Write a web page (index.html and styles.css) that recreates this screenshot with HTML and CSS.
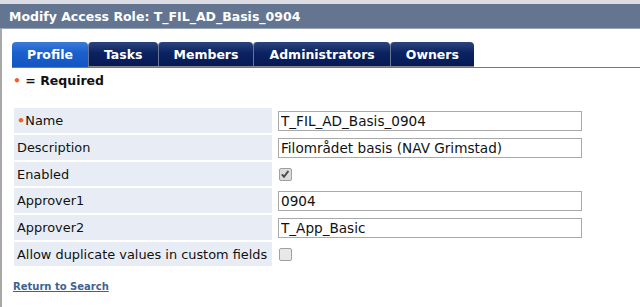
FILE: index.html
```html
<!DOCTYPE html>
<html>
<head>
<meta charset="utf-8">
<link rel="stylesheet" href="styles.css">
</head>
<body>
<div class="topstrip"></div>
<div class="titlebar">Modify Access Role: T_FIL_AD_Basis_0904</div>
<div class="page">
  <div class="tabs">
    <div class="tab active">Profile</div>
    <div class="tab">Tasks</div>
    <div class="tab">Members</div>
    <div class="tab">Administrators</div>
    <div class="tab">Owners</div>
  </div>
  <div class="required"><span class="dot">•</span> = Required</div>
  <table class="form">
    <tr><td class="label"><span class="dot">•</span>Name</td><td class="field"><input class="text" type="text" value="T_FIL_AD_Basis_0904"></td></tr>
    <tr><td class="label">Description</td><td class="field"><input class="text" type="text" value="Filområdet basis (NAV Grimstad)"></td></tr>
    <tr class="short"><td class="label">Enabled</td><td class="field"><span class="cb checked"><svg viewBox="0 0 10 10" width="10" height="10"><path d="M1.8 5.4 L4 7.8 L8.4 2" fill="none" stroke="#4a4a4a" stroke-width="2"/></svg></span></td></tr>
    <tr><td class="label">Approver1</td><td class="field"><input class="text" type="text" value="0904"></td></tr>
    <tr><td class="label">Approver2</td><td class="field"><input class="text" type="text" value="T_App_Basic"></td></tr>
    <tr class="short"><td class="label">Allow duplicate values in custom fields</td><td class="field"><span class="cb"></span></td></tr>
  </table>
  <a class="back" href="#">Return to Search</a>
</div>
</body>
</html>
```
FILE: styles.css
```css
html, body {
  margin: 0;
  padding: 0;
  background: #fff;
  font-family: "DejaVu Sans", Verdana, sans-serif;
  font-size: 12px;
  color: #111;
}
.topstrip {
  height: 4px;
  background: #dcdde4;
}
.titlebar {
  height: 25px;
  line-height: 25px;
  background: #637591;
  border-bottom: 1px solid #9aa6ba;
  color: #fff;
  font-weight: bold;
  font-size: 12.5px;
  padding-left: 9px;
  box-sizing: border-box;
}
.page {
  border-left: 2px solid #a8a8a8;
  padding: 13px 0 0 10px;
  height: 278px;
  box-sizing: border-box;
}
.tabs {
  display: flex;
  border-bottom: 1px solid #6a78a8;
  height: 25px;
}
.tab {
  height: 24px;
  line-height: 25px;
  padding: 0 15px;
  color: #fff;
  font-weight: bold;
  font-size: 12.5px;
  background: linear-gradient(#2b447c, #0c2362 45%, #051a55);
  border-radius: 4px 4px 0 0;
  border-left: 1px solid #6a7696;
  border-bottom: 1px solid #888;
}
.tab:first-child { border-left: none; }
.tab.active {
  background: linear-gradient(#3b7ad8, #1a60cc 45%, #1356c4);
  border-bottom: 1px solid #1356c4;
}
.required {
  font-weight: bold;
  font-size: 12.5px;
  margin: 5px 0 0 1px;
  height: 16px;
  line-height: 16px;
}
.dot {
  color: #f0602a;
  font-weight: bold;
}
.form {
  border-spacing: 2px;
  margin: 17px 0 0 0;
}
.form td {
  padding: 0;
}
.label {
  background: #e8edf5;
  width: 252px;
  height: 25px;
  padding: 0 3px !important;
  font-size: 12.9px;
  white-space: nowrap;
}
.short .label { height: 24px; }
.field {
  padding-left: 4px !important;
}
.text {
  width: 304px;
  height: 20px;
  box-sizing: border-box;
  border: 1px solid #a9a9a9;
  font-family: "DejaVu Sans", Verdana, sans-serif;
  font-size: 13.6px;
  padding: 0 2px;
  color: #111;
  margin: 0;
  display: block;
}
.cb {
  display: block;
  width: 11px;
  height: 11px;
  border: 1px solid #a0a0a0;
  border-radius: 2px;
  background: #e8e8e8;
  margin-left: 1px;
  position: relative;
}
.cb.checked { background: #dcdcdc; }
.cb svg {
  position: absolute;
  left: 0;
  top: 0;
}
.back {
  display: inline-block;
  margin-top: 13px;
  margin-left: 1px;
  font-size: 10px;
  font-weight: bold;
  color: #3e6195;
}
```
